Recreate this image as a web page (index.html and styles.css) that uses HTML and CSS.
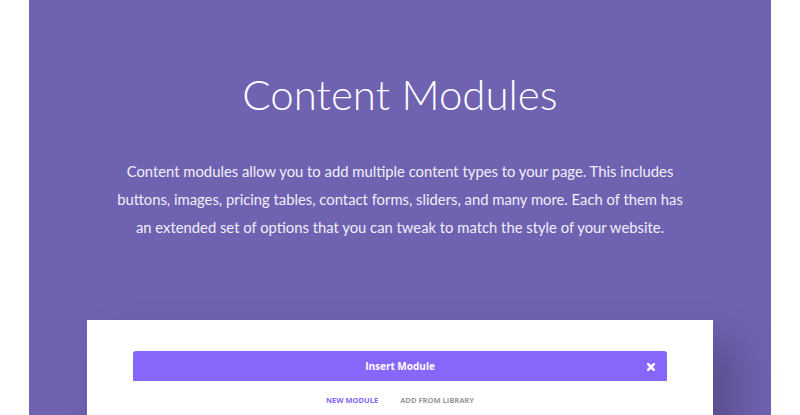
FILE: index.html
```html
<!DOCTYPE html>
<html lang="en">
<head>
    <meta charset="UTF-8">
    <meta name="viewport" content="width=device-width, initial-scale=1.0">
    <title>Content Modules</title>
    <link rel="stylesheet" href="styles.css">
</head>
<body>
    <section class="hero">
        <h1>Content Modules</h1>
        <p class="intro">Content modules allow you to add multiple content types to your page. This includes buttons, images, pricing tables, contact forms, sliders, and many more. Each of them has an extended set of options that you can tweak to match the style of your website.</p>

        <!-- Modal preview -->
        <div class="card">
            <div class="modal-head">
                <span class="modal-title">Insert Module</span>
                <svg class="close" width="8" height="8" viewBox="0 0 10 10">
                    <path d="M1.5 1.5 L8.5 8.5 M8.5 1.5 L1.5 8.5" stroke="#fff" stroke-width="3.2" stroke-linecap="square"/>
                </svg>
            </div>
            <div class="tabs">
                <span class="tab active">New Module</span>
                <span class="tab">Add From Library</span>
            </div>
        </div>
    </section>
</body>
</html>
```

FILE: styles.css
```css
body {
    margin: 0;
    background-color: #fff;
    font-family: Lato, "Open Sans", sans-serif;
    height: 415px;
    overflow: hidden;
}
.hero {
    margin: 0 29px;
    background-color: #6f62b1;
    padding-top: 69px;
    height: 400px;
    text-align: center;
}
h1 {
    font-size: 42px;
    font-weight: 300;
    line-height: 50px;
    color: #fff;
    margin: 0 0 38px;
}
.intro {
    width: 580px;
    margin: 0 auto;
    font-size: 14.8px;
    line-height: 28px;
    color: #f1effa;
}
.card {
    width: 534px;
    margin: 79px auto 0;
    padding: 31px 46px 0;
    height: 200px;
    background-color: #fff;
    box-shadow: 22px 24px 40px rgba(0, 0, 0, 0.22);
}
.modal-head {
    position: relative;
    height: 30px;
    background-color: #8766fc;
    border-radius: 3px 3px 0 0;
    display: flex;
    justify-content: center;
    align-items: center;
}
.modal-title {
    font-family: "Open Sans", sans-serif;
    font-size: 10px;
    font-weight: 700;
    color: #fff;
}
.close {
    position: absolute;
    right: 12px;
    top: 12px;
}
.tabs {
    display: flex;
    justify-content: center;
    gap: 22px;
    padding-top: 14px;
}
.tab {
    font-family: "Open Sans", sans-serif;
    font-size: 7.5px;
    font-weight: 700;
    text-transform: uppercase;
    color: #999;
}
.tab.active {
    color: #8766fc;
}
```
